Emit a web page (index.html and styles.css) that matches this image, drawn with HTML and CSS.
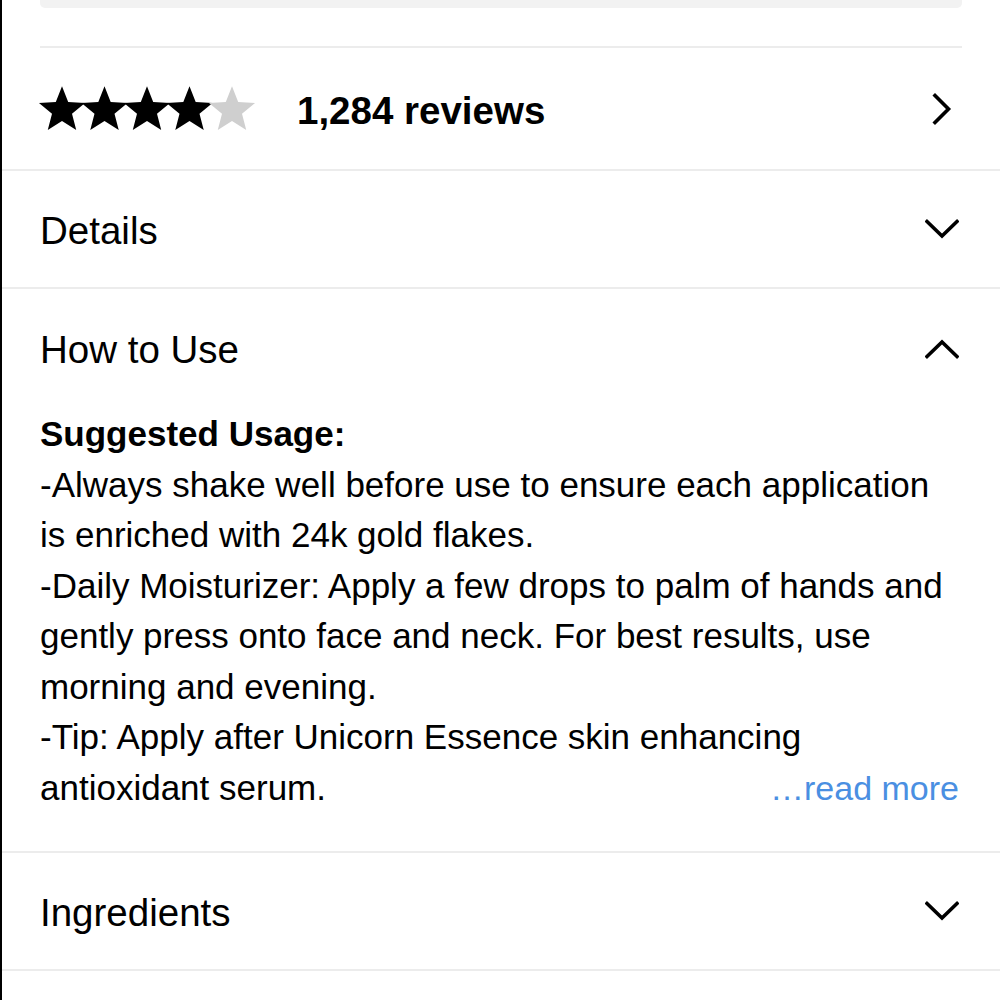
FILE: index.html
```html
<!DOCTYPE html>
<html lang="en">
<head>
<meta charset="utf-8">
<title>Product details</title>
<link rel="stylesheet" href="styles.css">
</head>
<body>
<div class="page">
  <div class="top-card"></div>
  <div class="top-rule"></div>

  <div class="row row-rating">
    <svg class="stars" width="222" height="48" viewBox="0 0 222 48" aria-label="4 out of 5 stars">
      <defs>
        <path id="star" d="M0,-24.2 L6.2,-8.5 L23.02,-7.48 L10,3.25 L14.22,19.58 L0,10.5 L-14.22,19.58 L-10,3.25 L-23.02,-7.48 L-6.2,-8.5 Z"/>
      </defs>
      <use href="#star" x="24" y="24.5" fill="#000"/>
      <use href="#star" x="66.5" y="24.5" fill="#000"/>
      <use href="#star" x="109" y="24.5" fill="#000"/>
      <use href="#star" x="151.5" y="24.5" fill="#000"/>
      <use href="#star" x="194" y="24.5" fill="#cfcfcf"/>
    </svg>
    <span class="reviews">1,284 reviews</span>
    <svg class="chev" width="34" height="34" viewBox="0 0 34 34"><path d="M10 3.5 L23.5 17 L10 30.5" /></svg>
  </div>

  <div class="row row-head">
    <span class="title">Details</span>
    <svg class="chev" width="34" height="34" viewBox="0 0 34 34"><path d="M2 9.5 L17 24 L32 9.5" /></svg>
  </div>

  <div class="section">
    <div class="row row-head row-open">
      <span class="title">How to Use</span>
      <svg class="chev" width="34" height="34" viewBox="0 0 34 34"><path d="M2 24.5 L17 10 L32 24.5" /></svg>
    </div>
    <div class="content">
      <p class="body"><strong>Suggested Usage:</strong><br>-Always shake well before use to ensure each application is enriched with 24k gold flakes.<br>-Daily Moisturizer: Apply a few drops to palm of hands and gently press onto face and neck. For best results, use morning and evening.<br>-Tip: Apply after Unicorn Essence skin enhancing antioxidant serum.<a class="more" href="#">…read more</a></p>
    </div>
  </div>

  <div class="row row-head">
    <span class="title">Ingredients</span>
    <svg class="chev" width="34" height="34" viewBox="0 0 34 34"><path d="M2 9.5 L17 24 L32 9.5" /></svg>
  </div>
</div>
</body>
</html>
```

FILE: styles.css
```css
html, body {
  margin: 0;
  padding: 0;
  background: #fff;
}

body {
  font-family: "Liberation Sans", Arial, Helvetica, sans-serif;
  color: #000;
}

.page {
  min-height: 1000px;
  border-left: 2px solid #000;
  box-sizing: border-box;
  overflow: hidden;
}

.top-card {
  height: 8px;
  margin: 0 38px 0 38px;
  background: #f2f2f2;
  border-radius: 0 0 5px 5px;
}

.top-rule {
  height: 2px;
  margin: 38px 38px 0 38px;
  background: #ececec;
}

.row {
  display: flex;
  align-items: center;
  padding: 0 41px 0 38px;
  border-bottom: 2px solid #ececec;
}

.row-rating {
  height: 121px;
}

.row-head {
  height: 116px;
}

.section {
  border-bottom: 2px solid #ececec;
}

.section .row-open {
  height: 120px;
  border-bottom: none;
}

.stars {
  margin-left: -2px;
  margin-top: 2px;
  margin-right: 37px;
  flex: none;
}

.reviews {
  font-weight: bold;
  font-size: 38.5px;
  margin-top: 5px;
}

.title {
  font-size: 38.5px;
  margin-top: 4px;
}

.row-open .title {
  margin-top: 2px;
}

.chev {
  margin-left: auto;
  flex: none;
  fill: none;
  stroke: #000;
  stroke-width: 3.6;
  stroke-linecap: square;
  stroke-linejoin: miter;
}

.content {
  padding: 0 41px 37px 38px;
}

.body {
  margin: 0;
  font-size: 35px;
  line-height: 50.57px;
}

.body::after {
  content: "";
  display: block;
  clear: both;
}

.body strong {
  font-weight: bold;
}

.more {
  float: right;
  font-size: 34px;
  line-height: 50.57px;
  color: #4a8fe2;
  text-decoration: none;
}
```
